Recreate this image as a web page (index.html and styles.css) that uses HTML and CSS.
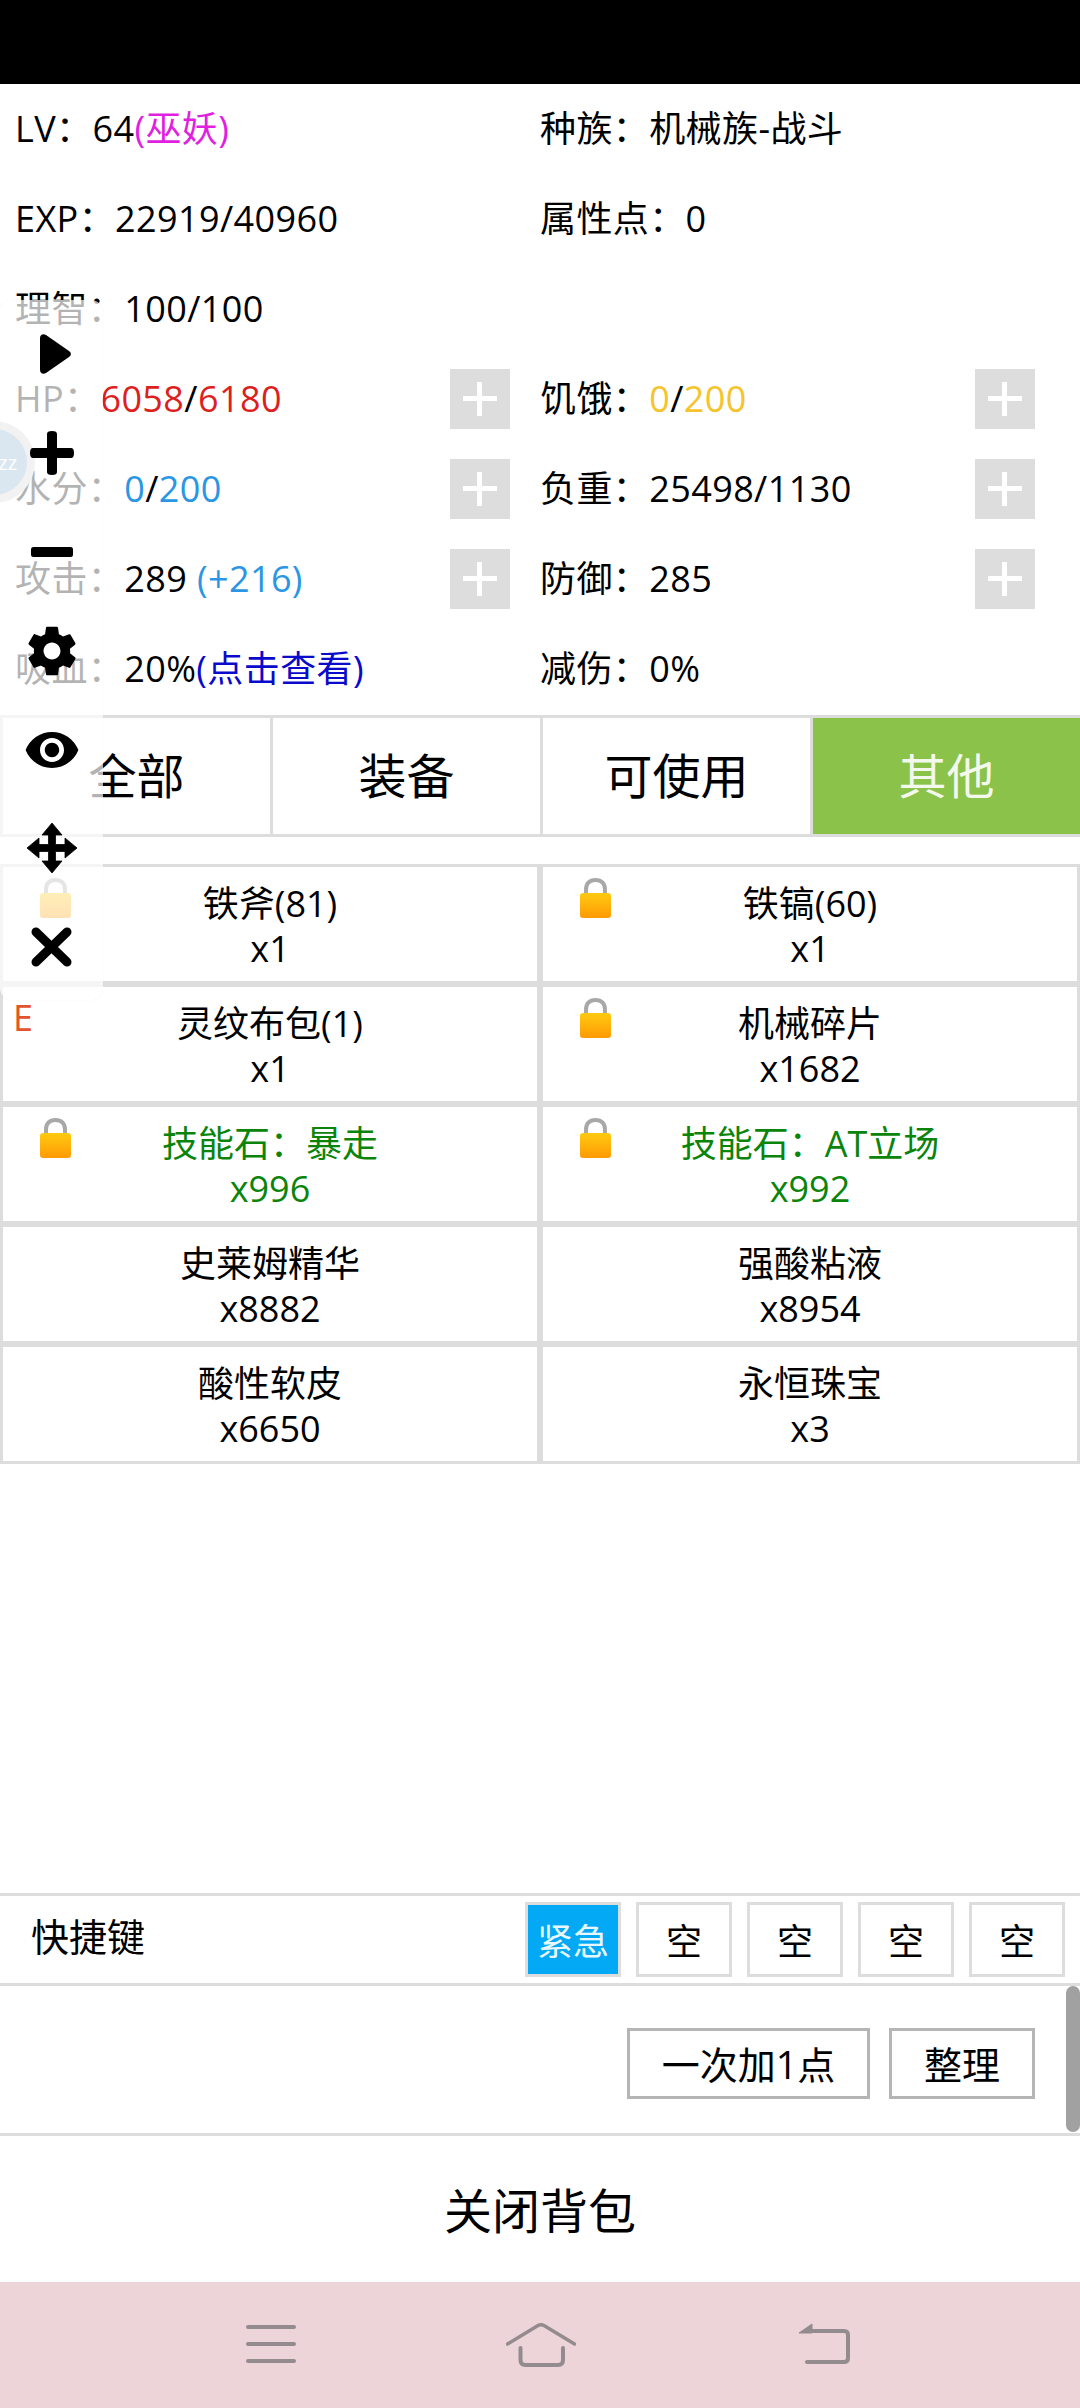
FILE: index.html
```html
<!DOCTYPE html>
<html lang="zh-CN">
<head>
    <meta charset="UTF-8">
    <meta name="viewport" content="width=device-width, initial-scale=1.0">
    <title>背包</title>
    <link rel="stylesheet" href="styles.css">
</head>
<body>
    <div class="status-bar"></div>

    <div class="stats">
        <div class="stat"><span class="stat-text">LV：64<span class="magenta">(巫妖)</span></span></div>
        <div class="stat right"><span class="stat-text">种族：机械族-战斗</span></div>
        <div class="stat"><span class="stat-text">EXP：22919/40960</span></div>
        <div class="stat right"><span class="stat-text">属性点：0</span></div>
        <div class="stat"><span class="stat-text">理智：100/100</span></div>
        <div class="stat right"></div>
        <div class="stat"><span class="stat-text">HP：<span class="red">6058</span>/<span class="red">6180</span></span><div class="plus"></div></div>
        <div class="stat right"><span class="stat-text">饥饿：<span class="yellow">0</span>/<span class="yellow">200</span></span><div class="plus"></div></div>
        <div class="stat"><span class="stat-text">水分：<span class="sky">0</span>/<span class="sky">200</span></span><div class="plus"></div></div>
        <div class="stat right"><span class="stat-text">负重：25498/1130</span><div class="plus"></div></div>
        <div class="stat"><span class="stat-text">攻击：289 <span class="sky">(+216)</span></span><div class="plus"></div></div>
        <div class="stat right"><span class="stat-text">防御：285</span><div class="plus"></div></div>
        <div class="stat"><span class="stat-text">吸血：20%<span class="blue">(点击查看)</span></span></div>
        <div class="stat right"><span class="stat-text">减伤：0%</span></div>
    </div>

    <div class="tabs">
        <div class="tab">全部</div>
        <div class="tab">装备</div>
        <div class="tab">可使用</div>
        <div class="tab active">其他</div>
    </div>

    <div class="items">
        <div class="item">
            <svg class="lock" viewBox="0 0 31 40"><use href="#lock-shape"></use></svg>
            <div>铁斧(81)</div><div>x1</div>
        </div>
        <div class="item">
            <svg class="lock" viewBox="0 0 31 40"><use href="#lock-shape"></use></svg>
            <div>铁镐(60)</div><div>x1</div>
        </div>
        <div class="item">
            <span class="grade">E</span>
            <div>灵纹布包(1)</div><div>x1</div>
        </div>
        <div class="item">
            <svg class="lock" viewBox="0 0 31 40"><use href="#lock-shape"></use></svg>
            <div>机械碎片</div><div>x1682</div>
        </div>
        <div class="item green">
            <svg class="lock" viewBox="0 0 31 40"><use href="#lock-shape"></use></svg>
            <div>技能石：暴走</div><div>x996</div>
        </div>
        <div class="item green">
            <svg class="lock" viewBox="0 0 31 40"><use href="#lock-shape"></use></svg>
            <div>技能石：AT立场</div><div>x992</div>
        </div>
        <div class="item"><div>史莱姆精华</div><div>x8882</div></div>
        <div class="item"><div>强酸粘液</div><div>x8954</div></div>
        <div class="item"><div>酸性软皮</div><div>x6650</div></div>
        <div class="item"><div>永恒珠宝</div><div>x3</div></div>
    </div>

    <div class="shortcuts">
        <span class="shortcuts-label">快捷键</span>
        <div class="slot urgent">紧急</div>
        <div class="slot">空</div>
        <div class="slot">空</div>
        <div class="slot">空</div>
        <div class="slot">空</div>
    </div>

    <div class="actions">
        <div class="action wide">一次加1点</div>
        <div class="action narrow">整理</div>
        <div class="scrollbar"></div>
    </div>

    <div class="close-bag">关闭背包</div>

    <div class="nav-bar">
        <svg class="nav-icon" viewBox="0 0 50 42">
            <path d="M2 7H48M2 24H48M2 41H48" transform="translate(0 -3)" stroke="#938b8d" stroke-width="4" stroke-linecap="round" fill="none"/>
        </svg>
        <svg class="nav-icon home" viewBox="0 0 70 44">
            <path d="M1.5 21L32 2.5Q35 1 38 2.5L68.5 21" stroke="#938b8d" stroke-width="3.5" stroke-linecap="round" fill="none"/>
            <path d="M14.5 25V37Q14.5 42 19.5 42H52Q57 42 57 37V25" stroke="#938b8d" stroke-width="4" stroke-linecap="round" fill="none"/>
        </svg>
        <svg class="nav-icon" viewBox="0 0 52 42">
            <path d="M9 39H46Q50 39 50 35V12Q50 8 46 8H12" stroke="#938b8d" stroke-width="4" stroke-linecap="round" fill="none"/>
            <path d="M1 10L14 1V10Z" fill="#938b8d" stroke="#938b8d" stroke-width="1" stroke-linejoin="round"/>
        </svg>
    </div>

    <!-- floating ball and toolbar from the game helper, lying over the page -->
    <div class="ball"><span class="ball-text">zz</span></div>
    <div class="float-panel">
        <div class="float-slot">
            <svg class="tool play" viewBox="0 0 31 40"><path d="M0 4C0 1 3 -1 6 1L29 17C31.500 18.500 31.500 21.500 29 23L6 39C3 41 0 39 0 36Z"/></svg>
        </div>
        <div class="float-slot">
            <svg class="tool add" viewBox="0 0 44 44"><path d="M17 3C17 1 18.500 0 22 0S27 1 27 3V17H41C43 17 44 18.500 44 22S43 27 41 27H27V41C27 43 25.500 44 22 44S17 43 17 41V27H3C1 27 0 25.500 0 22S1 17 3 17H17Z"/></svg>
        </div>
        <div class="float-slot">
            <svg class="tool minus" viewBox="0 0 42 10"><rect width="42" height="10" rx="2.500"/></svg>
        </div>
        <div class="float-slot">
            <svg class="tool gear" viewBox="0 0 24 24"><path d="M19.430 12.980c.040-.320.070-.640.070-.980s-.030-.660-.070-.980l2.110-1.650c.190-.150.240-.420.120-.640l-2-3.460c-.120-.220-.390-.300-.610-.220l-2.490 1c-.520-.400-1.080-.730-1.690-.980l-.380-2.650A.488.488 0 0 0 14 2h-4c-.250 0-.460.180-.490.420l-.380 2.650c-.610.250-1.170.590-1.690.980l-2.490-1c-.230-.090-.490 0-.610.220l-2 3.460c-.130.220-.070.490.120.640l2.110 1.650c-.040.320-.070.650-.070.980s.030.660.070.980l-2.110 1.650c-.190.150-.240.420-.120.640l2 3.460c.120.220.390.300.610.220l2.490-1c.520.400 1.080.730 1.690.980l.380 2.650c.030.240.240.420.490.420h4c.250 0 .460-.180.490-.420l.380-2.650c.610-.250 1.170-.590 1.690-.980l2.490 1c.230.090.490 0 .610-.220l2-3.460c.120-.220.070-.490-.120-.640l-2.110-1.650zM12 15.500c-1.930 0-3.500-1.570-3.500-3.500s1.570-3.500 3.500-3.500 3.500 1.570 3.500 3.500-1.570 3.500-3.500 3.500z"/></svg>
        </div>
        <div class="float-slot">
            <svg class="tool eye" viewBox="1 4.500 22 15"><path d="M12 4.500C7 4.500 2.730 7.610 1 12c1.730 4.390 6 7.500 11 7.500s9.270-3.110 11-7.500c-1.730-4.390-6-7.500-11-7.500zM12 17c-2.760 0-5-2.240-5-5s2.240-5 5-5 5 2.240 5 5-2.240 5-5 5zm0-8c-1.660 0-3 1.340-3 3s1.340 3 3 3 3-1.340 3-3-1.340-3-3-3z"/></svg>
        </div>
        <div class="float-slot">
            <svg class="tool move" viewBox="0 0 50 50"><path d="M25 0L35 12H28.500V21.500H38V15L50 25L38 35V28.500H28.500V38H35L25 50L15 38H21.500V28.500H12V35L0 25L12 15V21.500H21.500V12H15Z" stroke="#000" stroke-width="0.8" stroke-linejoin="round"/></svg>
        </div>
        <div class="float-slot">
            <svg class="tool cross" viewBox="0 0 41 40"><path d="M5 5L36 35M36 5L5 35" stroke="#000" stroke-width="9" stroke-linecap="round" fill="none"/></svg>
        </div>
    </div>

    <svg class="defs" width="0" height="0">
        <defs>
            <linearGradient id="lock-body" x1="0" y1="0" x2="0" y2="1">
                <stop offset="0" stop-color="#ffca10"/>
                <stop offset="1" stop-color="#ff9a05"/>
            </linearGradient>
            <g id="lock-shape">
                <path d="M6 17V11.500C6 5.500 9.500 2 15.500 2S25 5.500 25 11.500V17" stroke="#a8a8a8" stroke-width="4" fill="none"/>
                <rect x="0" y="15" width="31" height="25" rx="3" fill="url(#lock-body)"/>
            </g>
        </defs>
    </svg>
</body>
</html>
```

FILE: styles.css
```css
* {
    box-sizing: border-box;
}
body {
    position: relative;
    display: flex;
    flex-direction: column;
    width: 1080px;
    height: 2408px;
    margin: 0;
    overflow: hidden;
    background-color: #fff;
    color: #000;
    font-family: "Open Sans", "Noto Sans CJK SC", sans-serif;
    font-size: 36px;
}
.status-bar {
    height: 84px;
    background-color: #000;
}

/* stats */
.stats {
    display: grid;
    grid-template-columns: 540px 540px;
    grid-auto-rows: 90px;
}
.stat {
    display: flex;
    align-items: center;
    justify-content: space-between;
    padding: 0 30px 0 15px;
}
.stat.right {
    padding: 0 45px 0 0;
}
.stat-text {
    margin-bottom: 6px;
    letter-spacing: 0.4px;
    white-space: pre;
}
.plus {
    position: relative;
    width: 60px;
    height: 60px;
    background-color: #ddd;
}
.plus::before,
.plus::after {
    content: "";
    position: absolute;
    background-color: #fff;
}
.plus::before {
    left: 13px;
    top: 27px;
    width: 34px;
    height: 5px;
}
.plus::after {
    left: 27px;
    top: 13px;
    width: 5px;
    height: 34px;
}
.magenta { color: #e01fe0; }
.red { color: #dc1f1f; }
.yellow { color: #f5c42c; }
.sky { color: #2b96e3; }
.blue { color: #0a0acb; }

/* tabs */
.tabs {
    display: flex;
    margin-top: 1px;
    height: 122px;
}
.tab {
    display: flex;
    flex: 1;
    align-items: center;
    justify-content: center;
    padding-bottom: 6px;
    border: 3px solid #ddd;
    border-right: 0;
    font-size: 48px;
}
.tab.active {
    background-color: #8bc34a;
    color: #f4f9ee;
}

/* items */
.items {
    display: grid;
    flex: 1;
    grid-template-columns: 540px 540px;
    grid-auto-rows: 120px;
    margin-top: 27px;
}
.item {
    position: relative;
    display: flex;
    flex-direction: column;
    align-items: center;
    justify-content: center;
    padding-top: 4px;
    border: 3px solid #ddd;
    line-height: 45px;
}
.item.green {
    color: #0b840b;
}
.lock {
    position: absolute;
    left: 37px;
    top: 11px;
    width: 31px;
    height: 40px;
}
.grade {
    position: absolute;
    left: 10px;
    top: 8px;
    color: #e2542d;
}

/* shortcuts */
.shortcuts {
    display: flex;
    align-items: center;
    gap: 15px;
    height: 93px;
    padding: 0 15px 0 31px;
    border-top: 3px solid #ddd;
    border-bottom: 3px solid #ddd;
}
.shortcuts-label {
    margin-right: auto;
    margin-bottom: 10px;
    font-size: 38px;
}
.slot {
    display: flex;
    align-items: center;
    justify-content: center;
    width: 96px;
    height: 75px;
    border: 3px solid #ddd;
}
.slot.urgent {
    background-color: #03a9f4;
    color: #e8f7fe;
}

/* actions */
.actions {
    position: relative;
    display: flex;
    align-items: center;
    justify-content: flex-end;
    gap: 19px;
    height: 150px;
    padding: 8px 45px 0 0;
    border-bottom: 3px solid #ddd;
}
.action {
    display: flex;
    align-items: center;
    justify-content: center;
    height: 71px;
    padding-bottom: 3px;
    border: 3px solid #b5b5b5;
    font-size: 38px;
}
.action.wide { width: 243px; }
.action.narrow { width: 146px; }
.scrollbar {
    position: absolute;
    right: 0;
    top: 0;
    width: 14px;
    height: 146px;
    border-radius: 7px;
    background-color: #a1a1a1;
}

.close-bag {
    display: flex;
    align-items: center;
    justify-content: center;
    height: 146px;
    padding-bottom: 3px;
    font-size: 48px;
}

/* navigation bar */
.nav-bar {
    position: relative;
    height: 126px;
    background-color: #ecd4d8;
}
.nav-icon {
    position: absolute;
    top: 41px;
    left: 246px;
    width: 50px;
    height: 42px;
}
.nav-icon.home {
    left: 506px;
    width: 70px;
    height: 44px;
}
.nav-icon:last-child {
    left: 798px;
    width: 52px;
}

/* floating helper */
.ball {
    position: absolute;
    left: -47px;
    top: 421px;
    display: flex;
    align-items: center;
    justify-content: flex-end;
    width: 82px;
    height: 82px;
    padding-right: 10px;
    border: 8px solid #d4d4d4;
    border-radius: 50%;
    background-color: #84aecd;
    color: #fff;
    font-size: 20px;
}
.float-panel {
    position: absolute;
    left: 0;
    top: 300px;
    display: flex;
    flex-direction: column;
    width: 103px;
    height: 700px;
    padding: 5px 0 3.4px;
    border-radius: 12px;
    background-color: rgba(255, 255, 255, 0.7);
    box-shadow: 0 0 1px rgba(0, 0, 0, 0.1);
}
.float-slot {
    display: flex;
    flex: 1;
    align-items: center;
    justify-content: center;
}
.tool { fill: #000; }
.tool.play { width: 31px; height: 40px; margin-left: 7px; }
.tool.add { width: 44px; height: 44px; }
.tool.minus { width: 42px; height: 10px; }
.tool.gear { width: 58px; height: 58px; }
.tool.eye { width: 60px; height: 36px; }
.tool.move { width: 50px; height: 50px; }
.tool.cross { width: 41px; height: 40px; }
.defs {
    position: absolute;
}
```
